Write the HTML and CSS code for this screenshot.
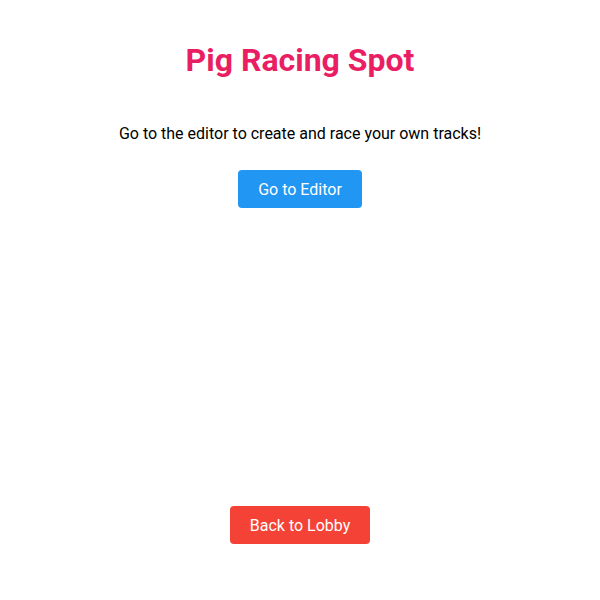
FILE: index.html
```html
<!DOCTYPE html>
<html>
<head>
<meta charset="utf-8">
<link rel="stylesheet" href="styles.css">
</head>
<body>
<div class="page">
  <h1 class="title">Pig Racing Spot</h1>
  <p class="intro">Go to the editor to create and race your own tracks!</p>
  <button class="btn btn-blue">Go to Editor</button>
  <div class="spacer"></div>
  <button class="btn btn-red">Back to Lobby</button>
</div>
</body>
</html>
```

FILE: styles.css
```css
html, body {
  margin: 0;
  padding: 0;
  background: #ffffff;
}
body {
  font-family: Roboto, "Noto Sans", sans-serif;
  color: #000;
}
.page {
  height: 600px;
  box-sizing: border-box;
  display: flex;
  flex-direction: column;
  align-items: center;
  padding: 20px 20px 56px;
}
.title {
  font-size: 32px;
  font-weight: 700;
  color: #e91e63;
  margin: 22px 0 0;
  line-height: 37px;
}
.intro {
  font-size: 16px;
  margin: 45px 0 0;
  line-height: 19px;
}
.btn {
  font-family: Roboto, "Noto Sans", sans-serif;
  font-size: 16px;
  color: #fff;
  border: none;
  border-radius: 4px;
  padding: 0 20px;
  height: 38px;
  cursor: pointer;
}
.btn-blue {
  background: #2196f3;
  margin-top: 27px;
}
.btn-red {
  background: #f44336;
}
.spacer {
  flex: 1;
}
```
